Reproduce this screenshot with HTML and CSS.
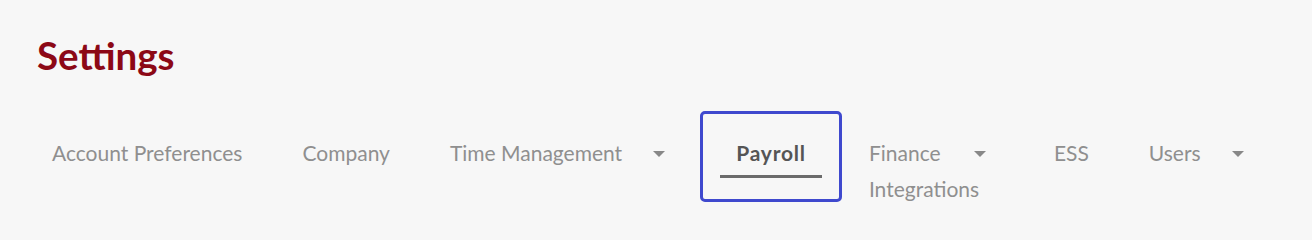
FILE: index.html
```html
<!DOCTYPE html>
<html lang="en">
<head>
<meta charset="utf-8">
<title>Settings</title>
<link rel="stylesheet" href="styles.css">
</head>
<body>
<div class="page">
  <h1 class="page-title">Settings</h1>
  <nav class="tabs">
    <ul class="tab-list">
      <li class="tab"><a class="tab-link" href="#"><span class="tab-label">Account Preferences</span></a></li>
      <li class="tab"><a class="tab-link" href="#"><span class="tab-label">Company</span></a></li>
      <li class="tab"><a class="tab-link tab-link--dropdown" href="#"><span class="tab-label">Time Management</span><span class="caret"></span></a></li>
      <li class="tab"><a class="tab-link tab-link--active" href="#"><span class="tab-label">Payroll</span></a></li>
      <li class="tab"><a class="tab-link tab-link--dropdown" href="#"><span class="tab-label tab-label--narrow">Finance Integrations</span><span class="caret"></span></a></li>
      <li class="tab"><a class="tab-link" href="#"><span class="tab-label">ESS</span></a></li>
      <li class="tab"><a class="tab-link tab-link--dropdown" href="#"><span class="tab-label">Users</span><span class="caret"></span></a></li>
    </ul>
  </nav>
</div>
</body>
</html>
```
FILE: styles.css
```css
* { box-sizing: border-box; }

html, body {
  margin: 0;
  padding: 0;
  background: #f7f7f7;
}

body {
  font-family: Lato, "Open Sans", "Liberation Sans", sans-serif;
}

.page {
  padding: 32px 0 0 37px;
}

.page-title {
  margin: 0;
  font-size: 38.5px;
  line-height: 1.2;
  font-weight: 700;
  color: #8c0816;
}

.tabs {
  margin-top: 36px;
  margin-left: -15px;
}

.tab-list {
  list-style: none;
  margin: 0;
  padding: 0;
  display: flex;
  align-items: flex-start;
}

.tab-link {
  display: flex;
  align-items: flex-start;
  padding: 21px 30px;
  font-size: 21px;
  color: #8f8f8f;
  text-decoration: none;
}

.tab-label {
  display: block;
  line-height: 36px;
  white-space: normal;
}

.tab-label--narrow {
  width: 74px;
}

.tab-link--dropdown {
  padding-right: 38px;
}

.caret {
  flex: none;
  width: 0;
  height: 0;
  margin-top: 16px;
  margin-left: 31px;
  border-left: 6px solid transparent;
  border-right: 6px solid transparent;
  border-top: 6px solid #888888;
}

.tab-link--active {
  padding: 21px 17px;
  font-weight: 700;
  letter-spacing: 0.8px;
  color: #555555;
  outline: 3px solid #3f49ce;
  border-radius: 2px;
}

.tab-link--active .tab-label {
  padding: 0 16px 4px;
  border-bottom: 3px solid #6b6b6b;
}
```
